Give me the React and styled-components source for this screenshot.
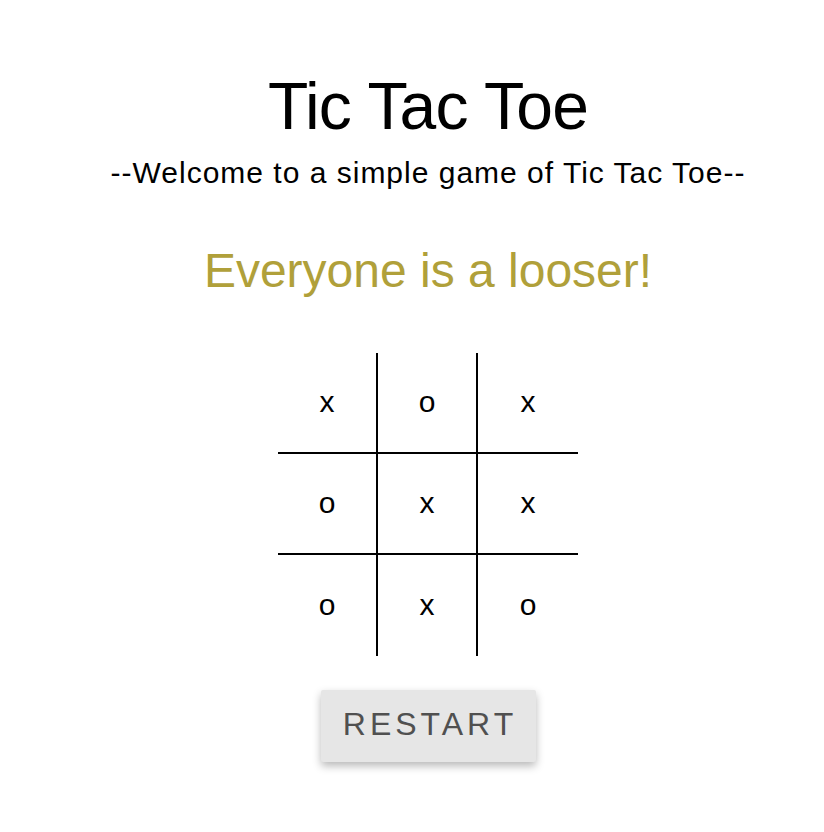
import styled, { createGlobalStyle } from 'styled-components';

const GlobalStyle = createGlobalStyle`
  body {
    margin: 0;
    background: #fff;
    font-family: "Liberation Sans", Arial, sans-serif;
    color: #000;
  }
`;

const Page = styled.div`
  display: flex;
  flex-direction: column;
  align-items: center;
  padding: 73px 0 40px 32px;
`;

const Title = styled.h1`
  margin: 0;
  font-size: 66px;
  line-height: 1;
  font-weight: normal;
  letter-spacing: -0.8px;
`;

const Subtitle = styled.p`
  margin: 19px 0 0;
  font-size: 30px;
  line-height: 1;
  letter-spacing: 1px;
`;

const Status = styled.h2`
  margin: 59px 0 0;
  font-size: 48px;
  line-height: 1;
  font-weight: normal;
  color: #b0a03a;
`;

const Board = styled.div`
  margin-top: 58px;
  display: grid;
  grid-template-columns: repeat(3, 100px);
  grid-template-rows: repeat(3, 101px);
`;

const Cell = styled.div`
  display: flex;
  align-items: center;
  justify-content: center;
  font-size: 30px;
  padding-bottom: 2px;
  border-right: ${({ $right }) => ($right ? '2px solid #000' : 'none')};
  border-bottom: ${({ $bottom }) => ($bottom ? '2px solid #000' : 'none')};
`;

const RestartButton = styled.button`
  margin-top: 34px;
  width: 215px;
  height: 72px;
  padding: 0 0 4px 4px;
  border: none;
  border-radius: 2px;
  background: #e6e6e6;
  box-shadow: 0 4px 8px rgba(0, 0, 0, 0.28);
  font-family: "Liberation Sans", Arial, sans-serif;
  font-size: 32px;
  letter-spacing: 4px;
  color: #505050;
  cursor: pointer;
`;

const squares = ['x', 'o', 'x', 'o', 'x', 'x', 'o', 'x', 'o'];

const App = () => (
  <>
    <GlobalStyle />
    <Page>
      <Title>Tic Tac Toe</Title>
      <Subtitle>--Welcome to a simple game of Tic Tac Toe--</Subtitle>
      <Status>Everyone is a looser!</Status>
      <Board>
        {squares.map((value, i) => (
          <Cell key={i} $right={i % 3 !== 2} $bottom={i < 6}>
            {value}
          </Cell>
        ))}
      </Board>
      <RestartButton type="button">RESTART</RestartButton>
    </Page>
  </>
);

export default App;
